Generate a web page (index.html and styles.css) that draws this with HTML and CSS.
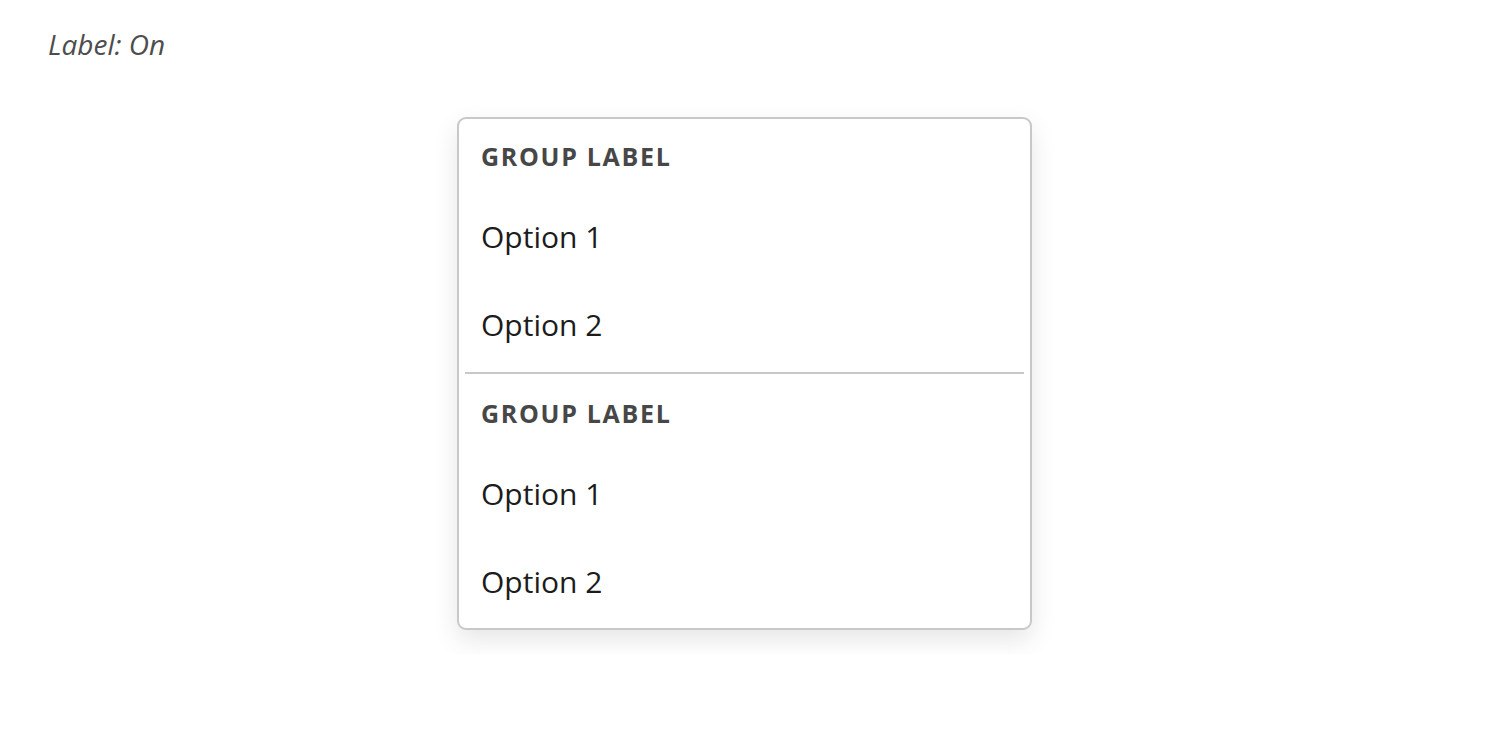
FILE: index.html
```html
<!DOCTYPE html>
<html lang="en">
<head>
<meta charset="utf-8">
<title>Menu groups</title>
<link rel="stylesheet" href="styles.css">
</head>
<body>
<div class="page">
  <p class="state-label">Label: On</p>
  <div class="menu" role="listbox">
    <div class="group">
      <div class="group-label">GROUP LABEL</div>
      <div class="option">Option 1</div>
      <div class="option">Option 2</div>
    </div>
    <div class="divider"></div>
    <div class="group">
      <div class="group-label">GROUP LABEL</div>
      <div class="option">Option 1</div>
      <div class="option">Option 2</div>
    </div>
  </div>
</div>
</body>
</html>
```

FILE: styles.css
```css
html, body {
  margin: 0;
  padding: 0;
  background: #ffffff;
}

.page {
  padding: 24px 48px;
  font-family: "Open Sans", Roboto, "Liberation Sans", sans-serif;
}

.state-label {
  margin: 0;
  font-size: 28px;
  line-height: 40px;
  font-style: italic;
  color: #4d4d4d;
}

.menu {
  margin-top: 53px;
  margin-left: 409px;
  width: 575px;
  box-sizing: border-box;
  border: 2px solid #c8c8c8;
  border-radius: 9px;
  background: #fff;
  box-shadow: 0 10px 26px rgba(0, 0, 0, 0.10);
  padding-bottom: 2px;
}

.group-label {
  height: 74px;
  display: flex;
  align-items: center;
  padding: 0 22px;
  font-size: 25px;
  font-weight: 700;
  letter-spacing: 1.7px;
  color: #474747;
}

.option {
  height: 88px;
  box-sizing: border-box;
  padding: 0 22px 1px;
  display: flex;
  align-items: center;
  font-size: 30px;
  color: #1c1c1c;
}

.divider {
  height: 2px;
  background: #c8c8c8;
  margin: 3px 6px 2px;
}
```
